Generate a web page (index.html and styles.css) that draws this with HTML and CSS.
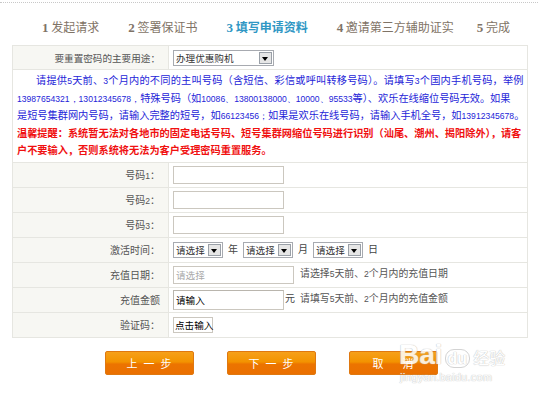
FILE: index.html
```html
<!DOCTYPE html>
<html>
<head>
<meta charset="utf-8">
<link rel="stylesheet" href="styles.css">
</head>
<body>
<div class="topline"></div>
<div class="steps">
  <span class="step"><b>1</b> 发起请求</span>
  <span class="step"><b>2</b> 签署保证书</span>
  <span class="step active"><b>3</b> 填写申请资料</span>
  <span class="step"><b>4</b> 邀请第三方辅助证实</span>
  <span class="step"><b>5</b> 完成</span>
</div>
<table class="form">
  <tr class="r-first">
    <td class="lbl lbl-first">要重置密码的主要用途：</td>
    <td class="val"><span class="select sel-wide"><span class="sel-text">办理优惠购机</span><span class="sel-btn"></span></span></td>
  </tr>
  <tr>
    <td class="notice" colspan="2">
      <div class="blue"><span class="line1"><span class="indent"></span>请提供<span class="n">5</span>天前、<span class="n">3</span>个月内的不同的主叫号码（含短信、彩信或呼叫转移号码）。请填写<span class="n">3</span>个国内手机号码，举例</span><br><span class="n">13987654321，13012345678，</span>特殊号码（如<span class="n">10086、13800138000、10000、95533</span>等）、欢乐在线缩位号码无效。如果<br>是短号集群网内号码，请输入完整的短号，如<span class="n">66123456；</span>如果是欢乐在线号码，请输入手机全号，如<span class="n">13912345678</span>。</div>
      <div class="red">温馨提醒：系统暂无法对各地市的固定电话号码、短号集群网缩位号码进行识别（汕尾、潮州、揭阳除外），请客<br>户不要输入，否则系统将无法为客户受理密码重置服务。</div>
    </td>
  </tr>
  <tr>
    <td class="lbl">号码<span class="n">1</span>：</td>
    <td class="val"><span class="input in-num"></span></td>
  </tr>
  <tr>
    <td class="lbl">号码<span class="n">2</span>：</td>
    <td class="val"><span class="input in-num"></span></td>
  </tr>
  <tr>
    <td class="lbl">号码<span class="n">3</span>：</td>
    <td class="val"><span class="input in-num"></span></td>
  </tr>
  <tr>
    <td class="lbl">激活时间：</td>
    <td class="val"><span class="select sel-sm"><span class="sel-text">请选择</span><span class="sel-btn"></span></span><span class="unit">年</span><span class="select sel-sm"><span class="sel-text">请选择</span><span class="sel-btn"></span></span><span class="unit">月</span><span class="select sel-sm"><span class="sel-text">请选择</span><span class="sel-btn"></span></span><span class="unit">日</span></td>
  </tr>
  <tr>
    <td class="lbl">充值日期：</td>
    <td class="val"><span class="input in-date">请选择</span><span class="hint">请选择<span class="n">5</span>天前、<span class="n">2</span>个月内的充值日期</span></td>
  </tr>
  <tr>
    <td class="lbl">充值金额</td>
    <td class="val"><span class="input in-amt">请输入</span><span class="yuan">元</span><span class="hint">请填写<span class="n">5</span>天前、<span class="n">2</span>个月内的充值金额</span></td>
  </tr>
  <tr>
    <td class="lbl">验证码：</td>
    <td class="val"><span class="input in-code">点击输入</span></td>
  </tr>
</table>
<div class="buttons">
  <span class="btn">上一步</span>
  <span class="btn">下一步</span>
  <span class="btn btn-cancel">取　消</span>
</div>
<div class="watermark">
  <div class="wm-top"><span class="wm-bai">Bai</span><span class="wm-du">du</span><span class="wm-jy">经验</span></div>
  <div class="wm-url">jingyan.baidu.com</div>
</div>
</body>
</html>
```
FILE: styles.css
```css
* { box-sizing: border-box; }
html, body { margin: 0; padding: 0; background: #fff; }
body {
  width: 538px;
  height: 397px;
  overflow: hidden;
  position: relative;
  font-family: "Noto Sans CJK SC", "DejaVu Sans", sans-serif;
  font-size: 10px;
  color: #444;
}
.topline {
  margin-top: 2px;
  border-top: 1px dotted #c8c8c8;
  height: 0;
}
.steps {
  display: flex;
  height: 42px;
  align-items: center;
  padding-left: 42px;
  padding-top: 6px;
  font-size: 12px;
  color: #7f7366;
  white-space: nowrap;
}
.step { margin-right: 29px; }
.step:nth-child(4) { margin-right: 23px; }
.step b { font-family: "Liberation Serif", serif; font-weight: bold; font-size: 13px; }
.step.active { color: #2f97c4; font-weight: bold; }
.form {
  margin-left: 12px;
  width: 516px;
  border-collapse: collapse;
  border: 1px solid #e6e6e1;
}
.form td {
  border: 1px solid #e6e6e1;
  padding: 0;
  height: 25px;
  vertical-align: middle;
}
.form tr.r-first td { height: 24px; }
.lbl {
  width: 156px;
  background: #f7f7f3;
  text-align: right;
  padding-right: 8px !important;
  color: #555;
  white-space: nowrap;
  font-size: 10px;
}
.lbl-first { font-size: 9.6px; }
.val {
  padding-left: 4px !important;
  white-space: nowrap;
  color: #444;
  font-size: 9.6px;
}
.n {
  font-family: "Liberation Sans", sans-serif;
  font-size: 8.6px;
  line-height: 1;
}
.notice {
  padding: 1px 2px 3px 4px !important;
  height: 92px !important;
  font-size: 10.2px;
  line-height: 17.5px;
  white-space: nowrap;
}
.line1 { letter-spacing: 0.2px; }
.indent { display: inline-block; width: 19px; }
.notice .blue { color: #2424d8; }
.notice .red { color: #f01010; font-weight: bold; }
.select {
  display: inline-flex;
  align-items: stretch;
  height: 16px;
  border: 1px solid #a7aab0;
  background: #fff;
  vertical-align: middle;
  color: #333;
}
.sel-text { flex: 1; padding-left: 2px; line-height: 14px; font-size: 9.6px; }
.sel-btn {
  width: 13px;
  margin: 1px;
  background: #e6e6e6;
  border: 1px solid #9aa0a8;
  position: relative;
}
.sel-btn::after {
  content: "";
  position: absolute;
  left: 2px;
  top: 4px;
  border-left: 3.5px solid transparent;
  border-right: 3.5px solid transparent;
  border-top: 4px solid #000;
}
.sel-wide { width: 101px; }
.sel-sm { width: 50px; }
.unit { display: inline-block; margin: 0 5px; color: #444; font-size: 10px; }
.input {
  display: inline-block;
  height: 18px;
  border: 1px solid #cbc7bf;
  background: #fff;
  vertical-align: middle;
  line-height: 16px;
  padding-left: 2px;
  color: #000;
  font-size: 9.6px;
}
.in-num { width: 111px; }
.in-date { width: 121px; color: #aaa; }
.in-amt { width: 111px; height: 20px; line-height: 18px; border-color: #b9b5ad #cbc7bf #cbc7bf #b9b5ad; }
.in-code { width: 40px; height: 16px; line-height: 14px; padding-left: 1px; }
.yuan { margin-left: 1px; font-size: 10px; }
.hint { margin-left: 6px; color: #555; font-size: 9.9px; }
.in-amt + .yuan + .hint { margin-left: 5px; }
.buttons {
  display: flex;
  justify-content: center;
  gap: 33px;
  margin-top: 13px;
  padding-left: 4px;
}
.btn {
  width: 89px;
  height: 24px;
  line-height: 22px;
  text-align: center;
  color: #fff;
  font-size: 11px;
  letter-spacing: 6px;
  padding-left: 6px;
  border: 1px solid #df7810;
  border-radius: 2px;
  background: linear-gradient(#f6a01a 0%, #f39300 45%, #ec7400 55%, #ea7000 100%);
  white-space: pre;
}
.btn-cancel { letter-spacing: 4px; padding-left: 4px; }
.watermark {
  position: absolute;
  left: 399px;
  top: 338px;
  color: #fff;
  font-family: "Liberation Sans", "Noto Sans CJK SC", sans-serif;
  text-shadow: 0 0 1px #bbb, 0 0 1px #bbb;
  opacity: 0.85;
}
.wm-top { display: flex; align-items: flex-end; height: 30px; }
.wm-bai { font-size: 28px; font-weight: bold; line-height: 26px; }
.wm-du { font-size: 16px; font-weight: bold; margin-left: 2px; line-height: 17px; border: 1px solid #ccc; border-radius: 9px; padding: 0 2px; }
.wm-jy { font-size: 16px; margin-left: 3px; line-height: 18px; }
.wm-url { font-size: 11px; margin-left: 1px; margin-top: 3px; letter-spacing: 0.2px; }
```
